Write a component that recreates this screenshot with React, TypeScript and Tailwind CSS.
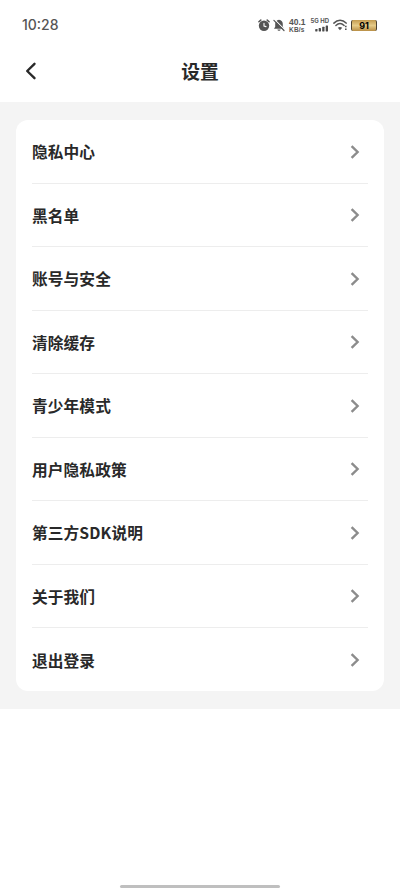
import React from 'react';

const menuItems = [
    '隐私中心',
    '黑名单',
    '账号与安全',
    '清除缓存',
    '青少年模式',
    '用户隐私政策',
    '第三方SDK说明',
    '关于我们',
    '退出登录',
];

const AlarmIcon = () => (
    <svg width="12" height="13" viewBox="0 0 12 13" fill="none">
        <circle cx="6" cy="6.8" r="5.2" fill="#555" />
        <path d="M0.9 2.8 2.8 1.1M11.1 2.8 9.2 1.1" stroke="#555" strokeWidth="1.5" strokeLinecap="round" />
        <path d="M6 4.2V7.1L8 7.6" stroke="#fff" strokeWidth="1.1" strokeLinecap="round" />
    </svg>
);

const MutedBellIcon = () => (
    <svg width="12" height="13" viewBox="0 0 12 13" fill="none">
        <path d="M6 0.8C3.5 1.2 2.2 3 2.2 5V7.8L1 9.8H11L9.8 7.8V5C9.8 3 8.5 1.2 6 0.8Z" fill="#555" />
        <path d="M4.4 10.4H7.6C7.4 12.2 4.6 12.2 4.4 10.4Z" fill="#555" />
        <path d="M1.6 0.7 11.8 10.9" stroke="#fff" strokeWidth="1.1" />
        <path d="M0.9 1.4 11 11.5" stroke="#555" strokeWidth="1.2" strokeLinecap="round" />
    </svg>
);

const SignalIcon = () => (
    <svg width="14" height="7" viewBox="0 0 14 7" fill="#4d4d4d">
        <rect x="0.2" y="4" width="2.3" height="2.5" rx="0.4" />
        <rect x="3.7" y="3" width="2.3" height="3.5" rx="0.4" />
        <rect x="7.2" y="1.8" width="2.3" height="4.7" rx="0.4" />
        <rect x="10.7" y="0.5" width="2.3" height="6" rx="0.4" />
    </svg>
);

const WifiIcon = () => (
    <svg width="15" height="12" viewBox="0 0 15 12" fill="none">
        <path d="M0.9 4.1C4.6 0.4 9.6 0.4 13.1 4.1" stroke="#555" strokeWidth="1.5" strokeLinecap="round" />
        <path d="M2.9 6.5C5.4 4.1 8.6 4.1 11.1 6.5" stroke="#555" strokeWidth="1.5" strokeLinecap="round" />
        <path d="M4.8 8.8C6.1 7.6 7.9 7.6 9.2 8.8L7 11.2Z" fill="#555" />
        <path d="M12.8 6.8V8.3M12.8 9.6V11.1" stroke="#555" strokeWidth="1.6" />
    </svg>
);

const StatusBar = () => (
    <div className="flex h-[50px] items-center justify-between pl-[22px] pr-[23px] text-[#555]">
        <span className="font-['Inter','Noto_Sans_CJK_SC',sans-serif] text-[14px] font-medium leading-none">10:28</span>
        <div className="flex items-center">
            <AlarmIcon />
            <div className="ml-[3px]">
                <MutedBellIcon />
            </div>
            <div className="ml-1 flex w-[17px] flex-col whitespace-nowrap font-['Liberation_Sans',sans-serif] font-bold">
                <span className="text-[8.5px] leading-[8px]">40.1</span>
                <span className="text-[6.5px] leading-[7px] tracking-[0.2px]">KB/s</span>
            </div>
            <div className="ml-1 flex w-[19px] flex-col items-end gap-px whitespace-nowrap font-['Inter',sans-serif]">
                <span className="text-[6px] font-bold leading-[6px]">5G HD</span>
                <SignalIcon />
            </div>
            <div className="ml-1">
                <WifiIcon />
            </div>
            <div className="ml-[3px] flex h-[11px] w-[26px] items-center justify-center rounded-[2px] border-x-[1.5px] border-[#4b4132] bg-linear-to-b from-[#c39b4f] via-[#e6cb88] to-[#b98f45] font-['Inter',sans-serif] text-[9px] font-bold leading-none text-black">
                91
            </div>
        </div>
    </div>
);

const App: React.FC = () => {
    return (
        <div className="flex h-[889px] w-[400px] flex-col bg-white font-['Noto_Sans_CJK_SC',sans-serif] text-[#292929]">
            <StatusBar />
            <header className="grid h-[52px] grid-cols-[60px_1fr_60px] items-start">
                <button className="flex h-[42px] items-center pl-[25px]" aria-label="返回">
                    <svg width="12" height="18" viewBox="0 0 12 18" fill="none">
                        <path d="M9.5 1.8 2.2 9 9.5 16.2" stroke="#292929" strokeWidth="2.4" strokeLinecap="round" strokeLinejoin="round" />
                    </svg>
                </button>
                <h1 className="text-center text-[18.8px] font-bold leading-[41px]">设置</h1>
            </header>
            <main className="h-[607px] bg-[#f4f4f4] px-4 pt-[18.4px]">
                <ul className="h-[570.8px] rounded-xl bg-white px-4">
                    {menuItems.map((item, index) => (
                        <li
                            key={item}
                            className={`flex h-[63.5px] items-center justify-between pr-2 ${index < menuItems.length - 1 ? 'border-b border-[#ededed]' : ''}`}
                        >
                            <span className="text-[15.7px] font-bold leading-[23px] tracking-[0.1px]">{item}</span>
                            <svg width="10" height="14" viewBox="0 0 10 14" fill="none">
                                <path d="M1.6 1.2 7.6 7 1.6 12.8" stroke="#8c8c8c" strokeWidth="2.4" />
                            </svg>
                        </li>
                    ))}
                </ul>
            </main>
            <footer className="mt-auto flex h-1 justify-center">
                <div className="h-[3px] w-[160px] rounded-full bg-[#bfbfbf]" />
            </footer>
        </div>
    );
};

export default App;
